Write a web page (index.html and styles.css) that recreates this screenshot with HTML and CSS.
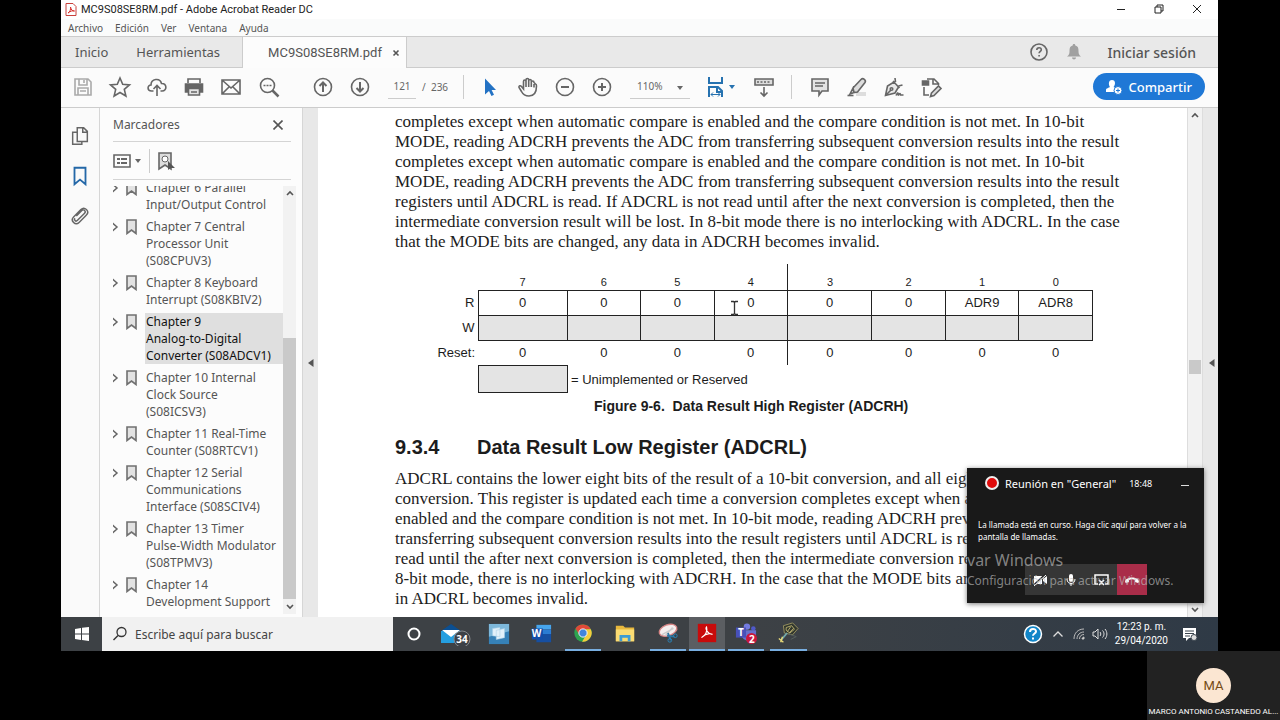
FILE: index.html
```html
<!DOCTYPE html>
<html lang="es">
<head>
<meta charset="utf-8">
<title>MC9S08SE8RM.pdf - Adobe Acrobat Reader DC</title>
<link rel="stylesheet" href="styles.css">
</head>
<body>
<svg width="0" height="0" class="defs"><symbol id="chev" viewBox="0 0 8 10"><path d="M1.500 1l4.500 4-4.500 4" fill="none" stroke="#666" stroke-width="1.500"/></symbol><symbol id="mark" viewBox="0 0 11 16"><path d="M1 1h9v13.500L5.500 11 1 14.500z" fill="#e2e2e2" stroke="#707070" stroke-width="1.600"/></symbol></svg>
<div class="screen">
  <header class="titlebar">
    <svg class="pdf-icon" width="12" height="13" viewBox="0 0 12 13"><path d="M1 .5h7l3 3v9H1z" fill="#fff" stroke="#c9403c"/><path d="M3 10c2-1 3-4 2.500-6 .5 3 2 4 4 4-2-.5-4 0-6.500 2" fill="none" stroke="#d8302c"/></svg>
    <span class="title">MC9S08SE8RM.pdf - Adobe Acrobat Reader DC</span>
    <div class="win-controls">
      <button aria-label="Minimizar"><svg width="10" height="10" viewBox="0 0 10 10"><path d="M1 5.500h8"/></svg></button>
      <button aria-label="Restaurar"><svg width="10" height="10" viewBox="0 0 10 10"><path d="M1 3h6v6H1zM3 3V1h6v6H7"/></svg></button>
      <button aria-label="Cerrar"><svg width="10" height="10" viewBox="0 0 10 10"><path d="M1 1l8 8M9 1L1 9"/></svg></button>
    </div>
  </header>
  <nav class="menubar"><button>Archivo</button><button>Edición</button><button>Ver</button><button>Ventana</button><button>Ayuda</button></nav>
  <div class="tabs">
    <button class="tab home">Inicio</button>
    <button class="tab tools">Herramientas</button>
    <div class="tab active"><span>MC9S08SE8RM.pdf</span><button aria-label="Cerrar pestaña"><svg width="8" height="8" viewBox="0 0 8 8"><path d="M1.500 1.500l5 5M6.500 1.500l-5 5" stroke="#555" stroke-width="1.600"/></svg></button></div>
    <div class="account">
      <button aria-label="Ayuda"><svg width="20" height="20" viewBox="0 0 20 20" class="ico"><circle cx="10" cy="10" r="8"/><path d="M7.800 8c0-3 4.500-3 4.500-.3 0 1.600-2.200 1.700-2.200 3.600M10.100 13v1.600"/></svg></button>
      <button aria-label="Notificaciones"><svg width="16" height="18" viewBox="0 0 16 18"><path d="M8 1c1 0 1.300.7 1.300 1.500C12 3 12.500 5 12.500 8c0 3 .5 4 2.500 5.500H1C3 12 3.500 11 3.500 8c0-3 .5-5 3.200-5.500C6.700 1.700 7 1 8 1zM6 14.500h4c0 2.500-4 2.500-4 0z" fill="#a0a0a0"/></svg></button>
      <button class="signin">Iniciar sesión</button>
    </div>
  </div>
  <div class="toolbar">
    <div class="group first">
      <button aria-label="Guardar"><svg class="ico light" viewBox="0 0 24 24"><path d="M4 4h13l3 3v13H4zM8 4v6h8V4M7 20v-7h10v7M13 5v3M9 16h6"/></svg></button>
      <button aria-label="Favorito"><svg class="ico" viewBox="0 0 24 24"><path d="M12 3l2.700 6.300 6.800.6-5.200 4.500 1.600 6.600-5.900-3.500L6.100 21l1.600-6.600L2.500 9.900l6.800-.6z"/></svg></button>
      <button aria-label="Subir"><svg class="ico" viewBox="0 0 24 24"><path d="M8.500 16H6.500c-4.500 0-4.500-6-.5-6 0-6.500 9-7.500 10.500-1.500C22 8 22.500 16 17 16h-1.500M12 21v-10M8.500 14L12 10.500l3.500 3.500"/></svg></button>
      <button aria-label="Imprimir"><svg class="ico" viewBox="0 0 24 24"><path d="M6 8V4h12v4"/><path d="M3.500 9h17v8H3.500z" fill="#666"/><path d="M6.500 13.500h11V20h-11zM9 17h6" fill="#e4e4e4"/></svg></button>
      <button aria-label="Correo"><svg class="ico" viewBox="0 0 24 24"><path d="M3 5h18v14H3zM3 5l9 8 9-8M3 19l7-7M21 19l-7-7"/></svg></button>
      <button aria-label="Buscar"><svg class="ico" viewBox="0 0 24 24"><circle cx="11.500" cy="10.500" r="7"/><path d="M16.500 15.500l6 6" stroke-width="2.500"/><path d="M7.500 10.500h2M10.500 10.500h2M13.500 10.500h2"/></svg></button>
    </div>
    <div class="group pages">
      <button aria-label="Página anterior"><svg class="ico" viewBox="0 0 24 24"><circle cx="12" cy="12" r="8.500"/><path d="M12 17V7.500M8.500 11L12 7.500l3.500 3.500" stroke-width="2"/></svg></button>
      <button aria-label="Página siguiente"><svg class="ico" viewBox="0 0 24 24"><circle cx="12" cy="12" r="8.500"/><path d="M12 7v9.500M8.500 13l3.500 3.500 3.500-3.500" stroke-width="2"/></svg></button>
    </div>
    <input class="page-no" aria-label="Página" value="121"><span class="page-total">/&nbsp; 236</span>
    <span class="sep"></span>
    <div class="group">
      <button aria-label="Seleccionar"><svg class="ico" viewBox="0 0 24 24"><path d="M6 3.500v16l4-3.500 2.500 5 2.500-1.200-2.400-4.800H17z" fill="#2372c4" stroke="none"/></svg></button>
      <button aria-label="Mano"><svg class="ico" viewBox="0 0 24 24"><path d="M7.500 14V6.500c0-2 2.500-2 2.500 0V5c0-2 2.700-2 2.700 0v1c0-2 2.600-2 2.600 0v1.500c0-2 2.700-2 2.700 0L19.500 9c1 0 1 1 1 2 0 6-2 10-7.500 10-4 0-6-1.500-7.500-4.500L3 12.500c-.5-2 1.500-2.200 2.500-1zM10 6.500V12M12.700 6v6M15.300 7v5M18 9v3.500"/></svg></button>
      <button aria-label="Alejar"><svg class="ico" viewBox="0 0 24 24"><circle cx="12" cy="12" r="8.500"/><path d="M8 12h8" stroke-width="2"/></svg></button>
      <button aria-label="Acercar"><svg class="ico" viewBox="0 0 24 24"><circle cx="12" cy="12" r="8.500"/><path d="M8 12h8M12 8v8" stroke-width="2"/></svg></button>
    </div>
    <div class="zoom"><select aria-label="Zoom"><option>110%</option></select><svg width="6" height="4" viewBox="0 0 6 4"><path d="M0 0h6L3 4z" fill="#666"/></svg></div>
    <button class="fit" aria-label="Ajustar ancho"><svg width="30" height="24" viewBox="0 0 30 24" fill="none" stroke="#2672b0" stroke-width="2"><path d="M4 2v6h13V2M4 22V12h9l4 4v6M12 12v5h5"/><path d="M6 19.500h9M8 17.500l-2 2 2 2M13 17.500l2 2-2 2" stroke-width="1"/><path d="M24 10h6l-3 4z" fill="#2672b0" stroke="none"/></svg></button>
    <button class="keys" aria-label="Desplazamiento"><svg class="ico" viewBox="0 0 24 24"><path d="M3 4h18v6H3z" fill="#ddd"/><path d="M5 7h2M8.500 7h2M12 7h2M15.500 7h2M12 12v9M8.500 17.500L12 21l3.500-3.500"/></svg></button>
    <span class="sep late"></span>
    <div class="group">
      <button aria-label="Comentar"><svg class="ico" viewBox="0 0 24 24"><path d="M4 4h16v12h-6l-3 4v-4H4z" fill="#e3e3e3"/><path d="M7 8h10M7 11h8"/></svg></button>
      <button aria-label="Resaltar"><svg class="ico" viewBox="0 0 24 24"><path d="M11 17h10v4H11z" fill="#ddd" stroke="none"/><path d="M8 13l8-8.500c2-2 5.500.5 4 3L12.500 17 9 17.500zM8 13l1 4.500L5 19z" fill="#ddd"/><path d="M2.500 20.500h6"/></svg></button>
      <button aria-label="Firmar"><svg class="ico" viewBox="0 0 24 24"><path d="M3.500 20.500l2-9.500L12 7l4.500 5-3.500 6zM11 6l6.500 7M13.500 7L13 3M16.500 11l4-1M3.500 20.500L9 15" fill="#e8e8e8"/><circle cx="9.500" cy="14" r="1.300"/><path d="M14 20.500c2-4 2.500-3 2 0 2-3 2.500-2 2.500-.5h3"/></svg></button>
      <button aria-label="Editar"><svg class="ico" viewBox="0 0 24 24"><path d="M8 4h7l4.500 4.500V10M14 4v5h5M5 12v8h5"/><path d="M3.500 6h6v4h-6z" fill="#666"/><path d="M12.500 18l7-7 2.500 2.500-7 7-3.500 1z" fill="#ddd"/></svg></button>
    </div>
    <button class="share"><svg width="17" height="16" viewBox="0 0 17 16"><path d="M6 1c4 0 3.500 5 1.500 7l2 1v4H0v-2c0-2 3-2 4-3C2.500 6 2 1 6 1z" fill="#fff"/><circle cx="12" cy="11.500" r="4" fill="#fff" stroke="#1f78d6"/><path d="M10 11.500h4M12 9.500v4" stroke="#1f78d6"/></svg>Compartir</button>
  </div>

  <main class="work">
    <nav class="rail">
      <button aria-label="Miniaturas"><svg class="ico" viewBox="0 0 24 24"><path d="M9 3h7l4 4v11H9zM15 3v5h5M9 8H4v13h10v-3"/></svg></button>
      <button aria-label="Marcadores"><svg viewBox="0 0 24 24" class="ico"><path d="M6 3h12v18l-6-5-6 5z" stroke="#2468a8" stroke-width="2"/></svg></button>
      <button aria-label="Adjuntos"><svg class="ico" viewBox="0 0 24 24"><path d="M8 12l6-6c2-2 5 1 3 3l-8 8c-1.500 1.500-4-.5-2.500-2.500M17 13l2-2c4-4-2-10-6-6l-8 8c-4 4 2 10 6 6l7-7"/></svg></button>
    </nav>
    <aside class="panel">
      <div class="panel-head"><span>Marcadores</span><button aria-label="Cerrar panel"><svg width="10" height="10" viewBox="0 0 10 10"><path d="M.5.5l9 9M9.500.5l-9 9" stroke="#555" stroke-width="1.600"/></svg></button></div>
      <div class="panel-tools">
        <button aria-label="Opciones"><svg width="28" height="20" viewBox="0 0 28 20"><path d="M1 4h16v12H1z" fill="none" stroke="#666" stroke-width="1.600"/><path d="M4 8h3M8 8h6M4 12h3M8 12h6" stroke="#666" stroke-width="2"/><path d="M22 8h6l-3 4z" fill="#666"/></svg></button>
        <span class="sep"></span>
        <button aria-label="Buscar marcador"><svg width="20" height="20" viewBox="0 0 20 20"><path d="M3 2h12v16l-6-4-6 4z" fill="#ddd" stroke="#666" stroke-width="1.600"/><circle cx="9" cy="8" r="3" fill="#fff" stroke="#666"/><path d="M12 10v9l2.500-2H19z" fill="#555"/></svg></button>
      </div>
      <div class="list-wrap">
        <ul class="marks">
          <li><svg class="chev"><use href="#chev"/></svg><svg class="mark"><use href="#mark"/></svg><a href="#c6">Chapter 6 Parallel<br>Input/Output Control</a></li>
          <li><svg class="chev"><use href="#chev"/></svg><svg class="mark"><use href="#mark"/></svg><a href="#c7">Chapter 7 Central<br>Processor Unit<br>(S08CPUV3)</a></li>
          <li><svg class="chev"><use href="#chev"/></svg><svg class="mark"><use href="#mark"/></svg><a href="#c8">Chapter 8 Keyboard<br>Interrupt (S08KBIV2)</a></li>
          <li><svg class="chev"><use href="#chev"/></svg><svg class="mark"><use href="#mark"/></svg><a class="current" href="#c9">Chapter 9<br>Analog-to-Digital<br>Converter (S08ADCV1)</a></li>
          <li><svg class="chev"><use href="#chev"/></svg><svg class="mark"><use href="#mark"/></svg><a href="#c10">Chapter 10 Internal<br>Clock Source<br>(S08ICSV3)</a></li>
          <li><svg class="chev"><use href="#chev"/></svg><svg class="mark"><use href="#mark"/></svg><a href="#c11">Chapter 11 Real-Time<br>Counter (S08RTCV1)</a></li>
          <li><svg class="chev"><use href="#chev"/></svg><svg class="mark"><use href="#mark"/></svg><a href="#c12">Chapter 12 Serial<br>Communications<br>Interface (S08SCIV4)</a></li>
          <li><svg class="chev"><use href="#chev"/></svg><svg class="mark"><use href="#mark"/></svg><a href="#c13">Chapter 13 Timer<br>Pulse-Width Modulator<br>(S08TPMV3)</a></li>
          <li><svg class="chev"><use href="#chev"/></svg><svg class="mark"><use href="#mark"/></svg><a href="#c14">Chapter 14<br>Development Support</a></li>
        </ul>
        <div class="scroll"><svg width="8" height="6" viewBox="0 0 8 6"><path d="M1 5l3-3 3 3"/></svg><span class="thumb"></span><svg width="8" height="6" viewBox="0 0 8 6"><path d="M1 1l3 3 3-3"/></svg></div>
      </div>
    </aside>
    <div class="strip"><svg width="6" height="10" viewBox="0 0 6 10"><path d="M5.500 1v8L0 5z" fill="#555"/></svg></div>
    <article class="doc">
      <p>completes except when automatic compare is enabled and the compare condition is not met. In 10-bit<br>MODE, reading ADCRH prevents the ADC from transferring subsequent conversion results into the result<br>completes except when automatic compare is enabled and the compare condition is not met. In 10-bit<br>MODE, reading ADCRH prevents the ADC from transferring subsequent conversion results into the result<br>registers until ADCRL is read. If ADCRL is not read until after the next conversion is completed, then the<br>intermediate conversion result will be lost. In 8-bit mode there is no interlocking with ADCRL. In the case<br>that the MODE bits are changed, any data in ADCRH becomes invalid.</p>
      <table class="register">
        <colgroup><col class="c-label"><col class="c-wide"><col><col><col><col class="c-mid"><col><col><col></colgroup>
        <tr class="bits"><td></td><th>7</th><th>6</th><th>5</th><th class="nib">4</th><th>3</th><th>2</th><th>1</th><th>0</th></tr>
        <tr class="read"><th>R</th><td>0</td><td>0</td><td>0</td><td>0</td><td>0</td><td>0</td><td>ADR9</td><td>ADR8</td></tr>
        <tr class="write"><th>W</th><td></td><td></td><td></td><td></td><td></td><td></td><td></td><td></td></tr>
        <tr class="reset"><th>Reset:</th><td>0</td><td>0</td><td>0</td><td class="nib">0</td><td>0</td><td>0</td><td>0</td><td>0</td></tr>
      </table>
      <div class="legend"><span class="swatch"></span>= Unimplemented or Reserved</div>
      <div class="caption">Figure 9-6.&nbsp; Data Result High Register (ADCRH)</div>
      <h2><span>9.3.4</span>Data Result Low Register (ADCRL)</h2>
      <p>ADCRL contains the lower eight bits of the result of a 10-bit conversion, and all eight bits<br>conversion. This register is updated each time a conversion completes except when automatic<br>enabled and the compare condition is not met. In 10-bit mode, reading ADCRH prevents<br>transferring subsequent conversion results into the result registers until ADCRL is read.<br>read until the after next conversion is completed, then the intermediate conversion results<br>8-bit mode, there is no interlocking with ADCRH. In the case that the MODE bits are<br>in ADCRL becomes invalid.</p>
      <svg class="ibeam" width="9" height="16" viewBox="0 0 9 16"><path d="M1 1.500h2.500l1 1 1-1H8M4.500 2v12M1 14.500h2.500l1-1 1 1H8" fill="none" stroke="#333" stroke-width="1.300"/></svg>
    </article>
    <div class="scroll main"><svg width="8" height="6" viewBox="0 0 8 6"><path d="M1 5l3-3 3 3"/></svg><span class="thumb"></span><svg width="8" height="6" viewBox="0 0 8 6"><path d="M1 1l3 3 3-3"/></svg></div>
    <div class="strip right"><svg width="6" height="10" viewBox="0 0 6 10"><path d="M5.500 1v8L0 5z" fill="#555"/></svg></div>
  </main>

  <footer class="taskbar">
    <button class="start" aria-label="Inicio"><svg width="16" height="16" viewBox="0 0 16 16"><path d="M1 3l6-1v5.500H1zM8 1.800L15 1v6.500H8zM1 8.500h6V14l-6-1zM8 8.500h7V15l-7-1z" fill="#fff"/></svg></button>
    <label class="search"><svg width="16" height="16" viewBox="0 0 16 16"><circle cx="9.500" cy="6" r="4.500" fill="none" stroke="#333" stroke-width="1.300"/><path d="M6 9.500L1.500 14" stroke="#333" stroke-width="1.500"/></svg><input type="text" placeholder="Escribe aquí para buscar" aria-label="Buscar"></label>
    <div class="apps">
      <button aria-label="Cortana"><svg viewBox="0 0 24 24"><circle cx="12" cy="12" r="6" fill="none" stroke="#fff" stroke-width="2.200"/></svg></button>
      <button aria-label="Correo"><svg class="wide" viewBox="0 0 32 24"><path d="M1 9l10-7 10 7v12H1z" fill="#0b4f92"/><path d="M1 9h20v12H1z" fill="#259fe0"/><path d="M2 8h18l-9 7z" fill="#fff"/><circle cx="22" cy="17" r="8" fill="#3c4147" stroke="#84898d"/></svg><em>34</em></button>
      <button aria-label="Biblioteca"><svg viewBox="0 0 24 24"><path d="M1 1h22v22H1z" fill="#3681b7"/><path d="M1 1h22v8L1 15z" fill="#7db8db"/><path d="M5 6l8-1v10l-8-1zM9 8l9-2v10l-9 2z" fill="#e2f1fa" stroke="#a9cfe8" stroke-width=".6"/></svg></button>
      <button aria-label="Word"><svg viewBox="0 0 24 24"><path d="M7 2h16v5H7z" fill="#47a5ed"/><path d="M7 7h16v5H7z" fill="#2b7cd3"/><path d="M7 12h16v9H7z" fill="#164fa2"/><path d="M2 6h12v12H2z" fill="#124eaa"/></svg><em class="w">W</em></button>
      <button class="run" aria-label="Chrome"><svg viewBox="0 0 24 24"><circle cx="12" cy="12" r="9.500" fill="#2da44f"/><path d="M3.800 7.200A9.500 9.500 0 0 1 20.500 8H12l-4 6z" fill="#df4938"/><path d="M20.500 8A9.500 9.500 0 0 1 11 21.500L16 13l-1-5z" fill="#f5cc3d"/><circle cx="12" cy="12" r="4.500" fill="#4285dc" stroke="#fff"/></svg></button>
      <button aria-label="Explorador"><svg viewBox="0 0 24 24"><path d="M2 3h8l2 2h10v15H2z" fill="#e8b83d"/><path d="M2 7h20v13H2z" fill="#fbdc73"/><path d="M6 20v-7h12v7h-3v-4H9v4z" fill="#3e9cd3"/></svg></button>
      <button class="run" aria-label="Recortes"><svg viewBox="0 0 24 24"><ellipse cx="12" cy="9" rx="10" ry="6" transform="rotate(-20 12 9)" fill="#f6eeee" stroke="#d78585" stroke-width="1.500"/><path d="M5 14l13-7M9 15l8-9" stroke="#ccc" stroke-width="1.500"/><path d="M12 12l3 8M11 15l8 1" stroke="#2b75a4" stroke-width="2"/><circle cx="14" cy="20" r="2" fill="none" stroke="#2986bd"/><circle cx="20" cy="15" r="2" fill="none" stroke="#2986bd"/></svg></button>
      <button class="run on" aria-label="Acrobat"><svg viewBox="0 0 24 24"><path d="M2 2h20v20H2z" fill="#c80b0b"/><path d="M6 17c4-2 7-7 5.500-11.500C10 7 12 13 18 13.500 14 12 9 14 6 17z" fill="none" stroke="#fff" stroke-width="1.300"/></svg></button>
      <button class="run" aria-label="Teams"><svg viewBox="0 0 24 24"><circle cx="13" cy="5" r="3.500" fill="#737be0"/><circle cx="20" cy="7" r="2.500" fill="#5059c9"/><path d="M8 9h15v8c-2 5-12 5-15 0z" fill="#6670cc"/><path d="M1 6h11v11H1z" fill="#4850b8"/><circle cx="18" cy="18" r="6" fill="#c9163d"/></svg><em class="t">T</em><em class="two">2</em></button>
      <button class="run" aria-label="Proyecto"><svg viewBox="0 0 24 24"><path d="M7 4l10-3 6 6-6 7-9-2z" fill="#30362d" stroke="#9c9560"/><path d="M10 6l6-2 3 4-5 4-4-3zM11 11l4-6M13 12l5-5" fill="none" stroke="#bbb070"/><path d="M11 12l-6 7" stroke="#72a7aa" stroke-width="2"/><path d="M2 18l5 4M4 22l2-6" stroke="#e8d978" stroke-width="1.500"/><path d="M13 13l8 3-6 3" fill="none" stroke="#55605d"/></svg></button>
    </div>
    <div class="tray">
      <button aria-label="Ayuda"><svg width="20" height="20" viewBox="0 0 20 20"><circle cx="10" cy="10" r="8.500" fill="#1286c8" stroke="#fff" stroke-width="1.500"/><path d="M7 8c0-4 6-4 6-.5 0 2-3 2-3 4.300M10 13.500v2" fill="none" stroke="#fff" stroke-width="2"/></svg></button>
      <button aria-label="Iconos ocultos"><svg width="12" height="12" viewBox="0 0 12 12"><path d="M1.500 8.500L6 4l4.500 4.500" fill="none" stroke="#ddd" stroke-width="1.300"/></svg></button>
      <button aria-label="Red"><svg width="12" height="14" viewBox="0 0 12 14" fill="none" stroke="#bbb"><path d="M1 12C1 6 5 2 11 2M4 12c0-4 3-7 7-7M6.500 12c0-3 2-4.500 4.500-4.500"/><path d="M9 12c0-1 1-2 2-2v2z" fill="#fff"/></svg></button>
      <button aria-label="Volumen"><svg width="16" height="14" viewBox="0 0 16 14" fill="none" stroke="#ddd"><path d="M1 5h2l3-3v10L3 9H1zM8 5c1 1 1 3 0 4M10.500 3.500c2 2 2 5 0 7M13 2c2.500 3 2.500 7 0 10"/></svg></button>
      <time>12:23 p. m.<br>29/04/2020</time>
      <button class="note" aria-label="Centro de actividades"><svg width="16" height="16" viewBox="0 0 16 16"><path d="M1 2h13v10H7l-3 3v-3H1z" fill="#fff"/><path d="M3 5h9M3 7.500h9M3 10h5" stroke="#3a444e"/><circle cx="12" cy="11.500" r="3" fill="#ddd" stroke="#3a444e"/></svg></button>
    </div>
  </footer>

  <section class="call">
    <div class="call-head"><span class="rec"></span><span class="call-title">Reunión en "General"</span><span class="time">18:48</span><button aria-label="Minimizar llamada"></button></div>
    <p>La llamada está en curso. Haga clic aquí para volver a la<br>pantalla de llamadas.</p>
    <div class="call-actions">
      <button aria-label="Cámara"><svg viewBox="0 0 18 18"><path d="M3 5h8v8H3zM12 8l4-3v8l-4-3z" fill="#fff"/><path d="M2 15L15 3" stroke="#292929" stroke-width="2"/><path d="M3 15L15 4" stroke="#fff"/></svg></button>
      <button aria-label="Micrófono"><svg viewBox="0 0 18 18"><rect x="7" y="3" width="4" height="8" rx="2" fill="#fff"/><path d="M5 8c0 6 8 6 8 0M9 12v3" fill="none" stroke="#fff"/></svg></button>
      <button aria-label="Dejar de compartir"><svg viewBox="0 0 18 18"><path d="M6 13H3V4h13v9h-3M7 9l5 5M12 9l-5 5" fill="none" stroke="#fff" stroke-width="1.500"/></svg></button>
      <button class="hang" aria-label="Colgar"><svg viewBox="0 0 18 18"><path d="M2 11c0-6 14-6 14 0l-1 1-3-1V9c-2-1-4-1-6 0v2l-3 1z" fill="#fff"/></svg></button>
    </div>
    <div class="watermark"><span>var Windows</span><br>Configuración para activar Windows.</div>
  </section>
</div>
<aside class="participant"><span class="avatar">MA</span><span>MARCO ANTONIO CASTANEDO AL...</span></aside>
</body>
</html>
```
FILE: styles.css
```css
* { box-sizing: border-box; }
body { margin: 0; background: #000; min-height: 100vh; display: flex; flex-direction: column; font-family: "Noto Sans", "Open Sans", sans-serif; color: #555; overflow: hidden; }
button { border: 0; background: none; padding: 0; margin: 0; font: inherit; color: inherit; display: flex; align-items: center; justify-content: center; }
button, svg { flex-shrink: 0; }
svg { display: block; }
.defs { position: absolute; }
input, select { font: inherit; color: inherit; border: 0; background: none; padding: 0; border-radius: 0; }
.screen { position: relative; height: calc(100vh - 69px); margin: 0 62px 0 61px; display: flex; flex-direction: column; background: #fff; white-space: nowrap; }
.ico { width: 24px; height: 24px; fill: none; stroke: #666; stroke-width: 1.6; }
.ico.light { stroke: #aaa; }
.tabs .ico { width: 20px; height: 20px; }

.titlebar { height: 19px; display: flex; align-items: center; padding: 0 0 1px 4px; color: #222; font-family: Roboto, sans-serif; font-size: 11px; }
.title { margin-left: 4px; }
.win-controls { margin-left: auto; display: flex; gap: 28px; padding-right: 16px; }
.win-controls svg { fill: none; stroke: #222; }
.menubar { height: 18px; display: flex; gap: 12px; padding-left: 7px; font-size: 10px; background: #fafbfb; border-bottom: 1px solid #ccc; }
.tabs { height: 31px; display: flex; background: #e9e9e9; border-bottom: 1px solid #ccc; font-size: 13px; }
.home { padding-left: 14px; }
.tools { padding: 0 22px 0 28px; }
.active { background: #fcfcfc; border: solid #ccc; border-width: 0 1px; display: flex; align-items: center; gap: 10px; padding: 0 6px 0 25px; margin-bottom: -1px; font-family: Roboto, sans-serif; }
.account { margin-left: auto; display: flex; align-items: center; gap: 17px; padding-right: 22px; }
.signin { margin-left: 9px; font-weight: 500; font-size: 14px; }
.toolbar { height: 40px; display: flex; align-items: center; padding-bottom: 2px; background: #fbfbfb; border-bottom: 1px solid #ccc; font-size: 10px; color: #666; }
.group { display: flex; gap: 13px; }
.first { margin-left: 10px; }
.pages { margin: 0 16px 0 31px; }
.page-no { width: 28px; height: 24px; text-align: center; border-bottom: 1px solid #ccc; }
.page-total { width: 41px; margin-left: 6px; }
.sep { width: 1px; height: 24px; background: #ccc; margin-right: 15px; }
.zoom { position: relative; width: 60px; margin: 0 15px 0 16px; }
.zoom select { width: 100%; height: 24px; appearance: none; padding-left: 7px; border-bottom: 1px solid #ccc; }
.zoom svg { position: absolute; right: 7px; top: 11px; pointer-events: none; }
.keys { margin: 0 15px 0 17px; }
.late { margin-right: 16px; }
.share { margin-left: auto; margin-right: 13px; height: 27px; padding: 0 13px; gap: 6px; border-radius: 14px; background: #1f78d6; color: #fff; font-weight: 500; font-size: 13px; }

.work { flex: 1; min-height: 0; display: flex; }
.rail { width: 38px; flex-shrink: 0; display: flex; flex-direction: column; align-items: center; gap: 16px; padding-top: 16px; background: #fafafa; }
.rail .ico { width: 22px; height: 24px; }
.panel { width: 204px; flex-shrink: 0; border: solid #d6d6d6; border-width: 0 1px; background: #fcfcfc; display: flex; flex-direction: column; font-size: 13px; padding: 0 5px 3px 13px; }
.panel-head { height: 34px; flex-shrink: 0; margin-right: 6px; border-bottom: 1px solid #d4d4d4; display: flex; align-items: center; justify-content: space-between; padding-right: 8px; font-size: 12px; }
.panel-tools { height: 38px; flex-shrink: 0; margin-right: 6px; border-bottom: 1px solid #d4d4d4; display: flex; align-items: center; }
.panel-tools .sep { margin: 0 6px 0 8px; }
.list-wrap { flex: 1; min-height: 0; margin-top: 6px; display: flex; overflow: hidden; }
.marks { list-style: none; margin: -7px 0 0; padding: 0; width: 170px; font-size: 12px; line-height: 17px; }
.marks li { display: flex; margin-bottom: 5px; }
.chev { width: 8px; height: 10px; margin: 4px 6px 0 -2px; }
.mark { width: 11px; height: 16px; margin: 1px 8px 0 1px; }
.marks a { color: #555; text-decoration: none; flex: 1; padding-left: 1px; }
.marks .current { background: #dfdfdf; color: #111; }
.scroll { width: 13px; display: flex; flex-direction: column; align-items: center; background: #f2f2f2; padding: 4px 0; }
.scroll svg { fill: none; stroke: #555; stroke-width: 1.6; }
.scroll .thumb { width: 100%; height: 261px; margin: auto 0 5px; background: #c9c9c9; }
.strip { width: 15px; flex-shrink: 0; display: flex; align-items: center; justify-content: center; background: #e8e8e8; }
.doc { position: relative; flex: 1; min-width: 0; padding: 4px 0 0 77px; color: #1c1c1c; background: #fff; font-family: "Liberation Sans", Arial, sans-serif; font-size: 13px; overflow: hidden; }
.doc p { margin: 0; font: 17px/20px "Liberation Serif", "Times New Roman", serif; }
.register { margin-top: 12px; border-collapse: collapse; table-layout: fixed; width: 698px; }
.c-label { width: 83px; } .c-wide { width: 89px; } .c-mid { width: 84px; }
.register td, .register th { padding: 0; font-weight: 400; text-align: center; height: 25px; }
.register .bits th { height: 26px; font-size: 11px; vertical-align: bottom; padding-bottom: 2px; }
.register tr > th:first-child { text-align: right; padding-right: 3px; }
.register .read td, .register .write td { border: 1px solid #222; }
.register .write td { background: #e4e4e4; }
.register .nib { border-right: 1px solid #222; }
.legend { display: flex; align-items: center; gap: 3px; margin-left: 83px; }
.swatch { width: 90px; height: 28px; border: 1px solid #222; background: #e4e4e4; }
.caption { margin: 3px 0 0 199px; font-size: 14px; font-weight: 700; line-height: 20px; }
.doc h2 { margin: 18px 0 9px; font-size: 20px; line-height: 26px; display: flex; }
.doc h2 span { width: 82px; }
.ibeam { position: absolute; left: 412px; top: 192px; }
.scroll.main { width: 16px; flex-shrink: 0; border: solid #ddd; border-width: 0 1px; }
.main .thumb { height: 14px; width: 12px; margin: auto 0 233px; }
.right svg { margin-left: 2px; }

.taskbar { height: 34px; flex-shrink: 0; display: flex; background: linear-gradient(90deg, #3d4145 60%, #2f3a46); color: #fff; }
.start { width: 41px; }
.search { width: 291px; background: #f1f1f1; display: flex; align-items: center; gap: 7px; padding-left: 10px; color: #444; font-size: 12px; }
.search input { flex: 1; min-width: 0; }
.search input::placeholder { color: #444; opacity: 1; }
.apps { width: 36%; display: flex; }
.apps button { flex: 1; position: relative; margin: 0 3px; }
.apps svg { width: 22px; height: 22px; }
.apps .wide { width: 32px; height: 24px; }
.apps .run { border-bottom: 2px solid #78aee0; }
.apps .on { background: #5b5e62; margin: 0; }
.apps em { position: absolute; font-style: normal; font-weight: 700; font-size: 10px; line-height: 12px; left: 18px; top: 16px; }
.apps .w { left: 9px; top: 10px; }
.apps .t { left: 10px; top: 9px; }
.apps .two { left: 21px; top: 16px; }
.tray { margin-left: auto; display: flex; align-items: center; padding-right: 20px; gap: 7px; }
.tray button:nth-child(2) { margin: 0 2px; }
.tray time { font-family: Roboto, sans-serif; font-size: 10px; line-height: 14px; text-align: center; }
.note { margin-left: 7px; }

.call { position: absolute; right: 14px; bottom: 48px; width: 237px; height: 135px; padding: 5px 11px 9px; background: #191919; color: #fff; box-shadow: 0 1px 5px #777; }
.call-head { display: flex; align-items: center; height: 20px; padding-left: 7px; font-size: 11px; }
.rec { width: 14px; height: 14px; border-radius: 50%; border: 2px solid #eee; background: #e00b0b; margin-right: 6px; }
.time { margin-left: 13px; font-size: 9px; }
.call-head button { width: 8px; height: 1px; background: #ddd; margin: 5px 4px 0 auto; }
.call p { margin: 26px 0 0; font-size: 8px; line-height: 12px; }
.call-actions { display: flex; width: 122px; margin: 21px 0 0 47px; background: #363636; }
.call-actions button { flex: 1; height: 31px; }
.call-actions svg { width: 18px; height: 18px; }
.call-actions .hang { background: #a92d49; }
.watermark { position: absolute; left: 0; top: 83px; color: rgba(190, 190, 190, .65); font-size: 12px; line-height: 19px; }
.watermark span { font-size: 16px; }

.participant { margin-left: auto; width: 133px; height: 69px; background: #222; color: #fff; display: flex; flex-direction: column; align-items: center; gap: 2px; padding-top: 17px; font-family: Roboto, sans-serif; font-size: 8px; line-height: 14px; white-space: nowrap; }
.avatar { width: 35px; height: 35px; border-radius: 50%; background: #fbe6d2; color: #754b16; font-size: 13px; line-height: 35px; text-align: center; }
```
